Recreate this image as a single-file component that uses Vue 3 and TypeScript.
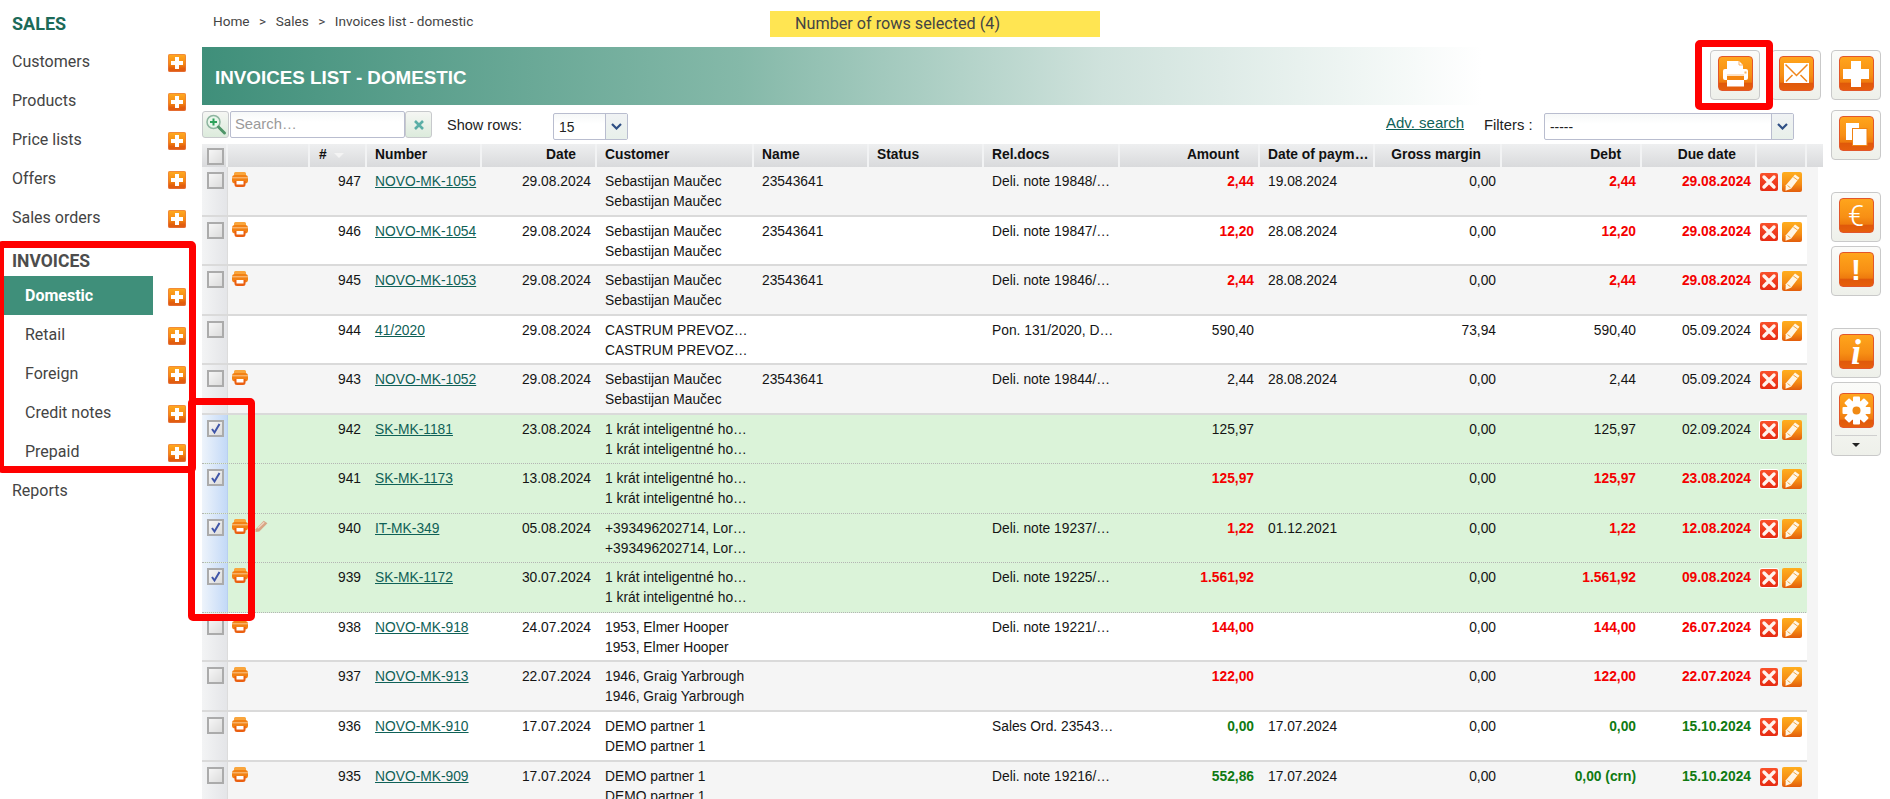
<script setup lang="ts">
type Tone = '' | 'red' | 'green'
interface InvoiceRow {
  no: number
  number: string
  date: string
  customer: string
  name: string
  rel: string
  amount: string
  paid: string
  margin: string
  debt: string
  due: string
  tone: Tone
  printer: boolean
  selected?: boolean
  note?: boolean
}

const S = 'Sebastijan Maučec'
const K = '1 krát inteligentné ho…'

const topItems = ['Customers', 'Products', 'Price lists', 'Offers', 'Sales orders']
const invoiceItems = ['Domestic', 'Retail', 'Foreign', 'Credit notes', 'Prepaid']

const headers = [
  { t: '', c: '' },
  { t: '', c: '' },
  { t: '#', c: 'sort' },
  { t: 'Number', c: '' },
  { t: 'Date', c: 'r' },
  { t: 'Customer', c: '' },
  { t: 'Name', c: '' },
  { t: 'Status', c: '' },
  { t: 'Rel.docs', c: '' },
  { t: 'Amount', c: 'r' },
  { t: 'Date of paym…', c: '' },
  { t: 'Gross margin', c: 'r' },
  { t: 'Debt', c: 'r' },
  { t: 'Due date', c: 'r' },
  { t: '', c: '' },
  { t: '', c: '' },
]

const rows: InvoiceRow[] = [
  { no: 947, number: 'NOVO-MK-1055', date: '29.08.2024', customer: S, name: '23543641', rel: 'Deli. note 19848/…', amount: '2,44', paid: '19.08.2024', margin: '0,00', debt: '2,44', due: '29.08.2024', tone: 'red', printer: true },
  { no: 946, number: 'NOVO-MK-1054', date: '29.08.2024', customer: S, name: '23543641', rel: 'Deli. note 19847/…', amount: '12,20', paid: '28.08.2024', margin: '0,00', debt: '12,20', due: '29.08.2024', tone: 'red', printer: true },
  { no: 945, number: 'NOVO-MK-1053', date: '29.08.2024', customer: S, name: '23543641', rel: 'Deli. note 19846/…', amount: '2,44', paid: '28.08.2024', margin: '0,00', debt: '2,44', due: '29.08.2024', tone: 'red', printer: true },
  { no: 944, number: '41/2020', date: '29.08.2024', customer: 'CASTRUM PREVOZ…', name: '', rel: 'Pon. 131/2020, D…', amount: '590,40', paid: '', margin: '73,94', debt: '590,40', due: '05.09.2024', tone: '', printer: false },
  { no: 943, number: 'NOVO-MK-1052', date: '29.08.2024', customer: S, name: '23543641', rel: 'Deli. note 19844/…', amount: '2,44', paid: '28.08.2024', margin: '0,00', debt: '2,44', due: '05.09.2024', tone: '', printer: true },
  { no: 942, number: 'SK-MK-1181', date: '23.08.2024', customer: K, name: '', rel: '', amount: '125,97', paid: '', margin: '0,00', debt: '125,97', due: '02.09.2024', tone: '', printer: false, selected: true },
  { no: 941, number: 'SK-MK-1173', date: '13.08.2024', customer: K, name: '', rel: '', amount: '125,97', paid: '', margin: '0,00', debt: '125,97', due: '23.08.2024', tone: 'red', printer: false, selected: true },
  { no: 940, number: 'IT-MK-349', date: '05.08.2024', customer: '+393496202714, Lor…', name: '', rel: 'Deli. note 19237/…', amount: '1,22', paid: '01.12.2021', margin: '0,00', debt: '1,22', due: '12.08.2024', tone: 'red', printer: true, selected: true, note: true },
  { no: 939, number: 'SK-MK-1172', date: '30.07.2024', customer: K, name: '', rel: 'Deli. note 19225/…', amount: '1.561,92', paid: '', margin: '0,00', debt: '1.561,92', due: '09.08.2024', tone: 'red', printer: true, selected: true },
  { no: 938, number: 'NOVO-MK-918', date: '24.07.2024', customer: '1953, Elmer Hooper', name: '', rel: 'Deli. note 19221/…', amount: '144,00', paid: '', margin: '0,00', debt: '144,00', due: '26.07.2024', tone: 'red', printer: true },
  { no: 937, number: 'NOVO-MK-913', date: '22.07.2024', customer: '1946, Graig Yarbrough', name: '', rel: '', amount: '122,00', paid: '', margin: '0,00', debt: '122,00', due: '22.07.2024', tone: 'red', printer: true },
  { no: 936, number: 'NOVO-MK-910', date: '17.07.2024', customer: 'DEMO partner 1', name: '', rel: 'Sales Ord. 23543…', amount: '0,00', paid: '17.07.2024', margin: '0,00', debt: '0,00', due: '15.10.2024', tone: 'green', printer: true },
  { no: 935, number: 'NOVO-MK-909', date: '17.07.2024', customer: 'DEMO partner 1', name: '', rel: 'Deli. note 19216/…', amount: '552,86', paid: '17.07.2024', margin: '0,00', debt: '0,00 (crn)', due: '15.10.2024', tone: 'green', printer: true },
]
</script>

<template>
  <div class="page">
    <svg class="defs" width="0" height="0" aria-hidden="true">
      <defs>
        <symbol id="mini-print" viewBox="0 0 16 15">
          <path d="M3.500 0h9A1.500 1.500 0 0 1 14 1.500V4H2V1.500A1.500 1.500 0 0 1 3.500 0z" fill="#f9a53c" />
          <rect x="0" y="3" width="16" height="8.500" rx="3" fill="#f28114" />
          <rect x="0" y="5.300" width="16" height="1" fill="#fbc68c" />
          <path d="M2.500 9h11v3.500A2.500 2.500 0 0 1 11 15H5a2.500 2.500 0 0 1-2.500-2.500z" fill="#ea5f10" />
          <rect x="4.500" y="9" width="7" height="3.500" fill="#fff" />
        </symbol>
        <symbol id="mini-note" viewBox="0 0 12 12">
          <path d="M0.500 9.500L8 1.500l3.500 2.500-7.500 7.500-3.500 0.500z" fill="#d8a585" />
          <path d="M2.500 8.500L8.500 3" stroke="#efd7c4" stroke-width="1.200" />
        </symbol>
        <symbol id="big-print" viewBox="0 0 35 35">
          <path d="M9 5h12l4 4v7H9z" fill="#fff" />
          <path d="M21 5v4h4" fill="none" stroke="#f6a24a" stroke-width="0.800" />
          <rect x="5" y="13" width="25" height="11" rx="2" fill="#fff" />
          <rect x="26.500" y="15.500" width="2" height="2" fill="#f9b25a" />
          <rect x="9" y="18.500" width="17" height="1" fill="#fbc48a" />
          <rect x="9" y="20" width="17" height="4" fill="#f5860f" />
          <rect x="9" y="24" width="17" height="6.500" fill="#fff" />
        </symbol>
        <symbol id="big-mail" viewBox="0 0 35 35">
          <rect x="5" y="7" width="25" height="20" fill="#fff" />
          <path d="M6.500 8.500l11 11 11-11M7 25.500l6.500-6.500M28 25.500L21.500 19" fill="none" stroke="#f0861b" stroke-width="1.500" />
        </symbol>
        <symbol id="big-copy" viewBox="0 0 35 35">
          <rect x="7" y="7" width="13" height="17" fill="#fff" />
          <rect x="13.500" y="12.500" width="14.500" height="17" fill="#fff" stroke="#f08212" stroke-width="1" />
        </symbol>
        <symbol id="big-gear" viewBox="0 0 35 35">
          <g fill="#fff">
            <rect x="14" y="3.500" width="7" height="28" rx="1" />
            <rect x="14" y="3.500" width="7" height="28" rx="1" transform="rotate(45 17.500 17.500)" />
            <rect x="14" y="3.500" width="7" height="28" rx="1" transform="rotate(90 17.500 17.500)" />
            <rect x="14" y="3.500" width="7" height="28" rx="1" transform="rotate(135 17.500 17.500)" />
            <circle cx="17.500" cy="17.500" r="10" />
          </g>
          <circle cx="17.500" cy="17.500" r="4" fill="#f08a14" />
        </symbol>
        <symbol id="x-mark" viewBox="0 0 18 18">
          <path d="M4 4l10 10M14 4L4 14" stroke="#fff4ee" stroke-width="3.400" stroke-linecap="round" />
        </symbol>
        <symbol id="pencil" viewBox="0 0 20 20">
          <path d="M13 2.500l4.500 3.200-8.500 11-5.500 2 0.300-5.500z" fill="#fff5e4" />
          <path d="M11.300 5l4.500 3.200" stroke="#f2a33a" stroke-width="1" />
          <path d="M5.500 13.500l3 2.300" stroke="#f2a33a" stroke-width="1" />
        </symbol>
      </defs>
    </svg>

    <aside class="side">
      <h2 class="side-title">SALES</h2>
      <div v-for="item in topItems" :key="item" class="side-row">
        <span class="side-label">{{ item }}</span>
        <span class="plus"></span>
      </div>
      <h3 class="side-group">INVOICES</h3>
      <div v-for="(item, i) in invoiceItems" :key="item" class="side-row sub">
        <span class="side-label" :class="{ active: i === 0 }">{{ item }}</span>
        <span class="plus"></span>
      </div>
      <div class="side-row"><span class="side-label">Reports</span></div>
    </aside>

    <main class="main">
      <div class="topbar">
        <nav class="crumbs">
          <span>Home</span><span class="gt">&gt;</span><span>Sales</span><span class="gt">&gt;</span><span>Invoices list - domestic</span>
        </nav>
        <div class="notice">Number of rows selected (4)</div>
      </div>

      <div class="titlebar">
        <h1 class="banner">INVOICES LIST - DOMESTIC</h1>
        <button class="tool print-tool"><span class="face"><svg class="glyph"><use href="#big-print" /></svg></span></button>
        <button class="tool mail-tool"><span class="face"><svg class="glyph"><use href="#big-mail" /></svg></span></button>
      </div>

      <div class="filters">
        <button class="sq search-btn">
          <svg width="24" height="24" viewBox="0 0 24 24">
            <circle cx="9.500" cy="9" r="6.500" fill="#e7f6ea" stroke="#8db59f" stroke-width="1.500" />
            <path d="M14.500 14l6 6" stroke="#4f9568" stroke-width="3" stroke-linecap="round" />
            <path d="M9.500 5.500v7M6 9h7" stroke="#2ca25a" stroke-width="2" />
          </svg>
        </button>
        <div class="search-input">Search…</div>
        <button class="sq clear-btn">
          <svg width="12" height="12" viewBox="0 0 12 12"><path d="M2 2l8 8M10 2l-8 8" stroke="#5aaea6" stroke-width="2.600" /></svg>
        </button>
        <span class="show-label">Show rows:</span>
        <div class="select rows-select">
          <span class="select-value">15</span>
          <span class="select-arrow"><svg width="11" height="7" viewBox="0 0 11 7"><path d="M1 1l4.500 4.500L10 1" fill="none" stroke="#2f4f84" stroke-width="2.200" /></svg></span>
        </div>
        <a class="adv">Adv. search</a>
        <span class="filters-label">Filters :</span>
        <div class="select filter-select">
          <span class="select-value">-----</span>
          <span class="select-arrow"><svg width="11" height="7" viewBox="0 0 11 7"><path d="M1 1l4.500 4.500L10 1" fill="none" stroke="#2f4f84" stroke-width="2.200" /></svg></span>
        </div>
      </div>

      <div class="table">
        <div class="thead grid-row">
          <div v-for="(h, i) in headers" :key="i" class="th" :class="h.c">
            <span v-if="i === 0" class="check"></span>
            <template v-else>{{ h.t }}</template>
          </div>
        </div>
        <div
          v-for="(r, i) in rows"
          :key="r.no"
          class="tr grid-row"
          :class="{ alt: i % 2 === 0, selected: r.selected }"
        >
          <div class="td cb"><span class="check">
            <svg v-if="r.selected" width="13" height="13" viewBox="0 0 13 13"><path d="M3 7l2.500 3.500L10.500 2" fill="none" stroke="#3f55a8" stroke-width="2" /></svg>
          </span></div>
          <div class="td acts">
            <svg v-if="r.printer" class="mini-print"><use href="#mini-print" /></svg>
            <svg v-if="r.note" class="mini-note"><use href="#mini-note" /></svg>
          </div>
          <div class="td num">{{ r.no }}</div>
          <div class="td"><a class="link">{{ r.number }}</a></div>
          <div class="td num">{{ r.date }}</div>
          <div class="td">{{ r.customer }}<br />{{ r.customer }}</div>
          <div class="td">{{ r.name }}</div>
          <div class="td"></div>
          <div class="td">{{ r.rel }}</div>
          <div class="td num" :class="r.tone">{{ r.amount }}</div>
          <div class="td">{{ r.paid }}</div>
          <div class="td num">{{ r.margin }}</div>
          <div class="td num" :class="r.tone">{{ r.debt }}</div>
          <div class="td num" :class="r.tone">{{ r.due }}</div>
          <div class="td row-btns">
            <span class="del"><svg width="18" height="18"><use href="#x-mark" /></svg></span>
            <span class="edit"><svg width="20" height="20"><use href="#pencil" /></svg></span>
          </div>
          <div class="gutter"></div>
        </div>
      </div>
    </main>

    <aside class="rail">
      <button class="tool"><span class="face"><span class="cross"></span></span></button>
      <button class="tool copy"><span class="face"><svg class="glyph"><use href="#big-copy" /></svg></span></button>
      <button class="tool euro"><span class="face sym euro-sym">€</span></button>
      <button class="tool warn"><span class="face sym warn-sym">!</span></button>
      <button class="tool info"><span class="face sym info-sym">i</span></button>
      <button class="tool gear">
        <span class="face"><svg class="glyph"><use href="#big-gear" /></svg></span>
        <span class="gear-foot"><span class="caret"></span></span>
      </button>
    </aside>

    <div class="mark mark-menu"></div>
    <div class="mark mark-rows"></div>
    <div class="mark mark-print"></div>
  </div>
</template>

<style>
html, body { margin: 0; background: #fff; }
</style>

<style scoped>
.page {
  position: relative;
  display: flex;
  width: 1890px;
  height: 799px;
  overflow: hidden;
  background: #fff;
  font-family: "Liberation Sans", Arial, sans-serif;
  color: #111;
}
.defs { position: absolute; }

/* sidebar */
.side {
  width: 202px;
  flex: none;
  font-family: Roboto, sans-serif;
  font-size: 16px;
  color: #444;
}
.side-title {
  margin: 0;
  height: 42px;
  padding: 13px 0 0 12px;
  box-sizing: border-box;
  font-size: 18px;
  line-height: 21px;
  font-weight: 700;
  color: #1c6a58;
}
.side-group {
  margin: 0;
  height: 39px;
  padding: 14px 0 0 12px;
  box-sizing: border-box;
  font-size: 17.500px;
  line-height: 20px;
  font-weight: 700;
  color: #4d4d4d;
}
.side-row {
  display: flex;
  align-items: center;
  height: 39px;
}
.side-label {
  display: block;
  box-sizing: border-box;
  width: 168px;
  height: 39px;
  padding-left: 12px;
  line-height: 40px;
}
.sub .side-label {
  width: 149px;
  margin: 0 15px 0 4px;
  padding-left: 21px;
}
.side-label.active {
  background: #3f8f7a;
  color: #fff;
  font-weight: 700;
}
.plus {
  position: relative;
  width: 18px;
  height: 18px;
  border-radius: 2px;
  margin-top: 2px;
  background: linear-gradient(#ffaa22, #f58a12 55%, #e35f0c 80%, #dd5a14);
  box-shadow: inset 0 0 0 1px rgba(233, 120, 70, .6);
}
.plus::before, .plus::after {
  content: "";
  position: absolute;
  background: #fff;
}
.plus::before { left: 7px; top: 3px; width: 4px; height: 12px; }
.plus::after { left: 3px; top: 7px; width: 12px; height: 4px; }

/* main */
.main {
  width: 1619px;
  flex: none;
  font-size: 13.800px;
}
.topbar {
  position: relative;
  height: 47px;
  display: flex;
  box-sizing: border-box;
  padding: 11px 0 0 11px;
}
.crumbs {
  width: 557px;
  display: flex;
  font-family: Roboto, sans-serif;
  font-size: 13.600px;
  line-height: 20px;
  color: #444;
}
.gt { margin: 0 9.500px; }
.notice {
  width: 330px;
  height: 26px;
  box-sizing: border-box;
  padding-left: 25px;
  background: #ffe552;
  font-family: Roboto, sans-serif;
  font-size: 16.200px;
  line-height: 26px;
  color: #444;
}
.titlebar {
  display: flex;
  height: 58px;
  align-items: flex-start;
}
.banner {
  flex: 1;
  margin: 0 10px 0 0;
  height: 58px;
  box-sizing: border-box;
  padding-left: 13px;
  font-size: 18.800px;
  line-height: 62px;
  font-weight: 700;
  color: #fff;
  background: linear-gradient(90deg, #3f8f7a 0, #85b9a9 540px, #cfe2dc 900px, #fff 1280px);
}
.tool {
  display: flex;
  flex-direction: column;
  align-items: center;
  width: 50px;
  height: 50px;
  padding: 5px 0 0;
  margin: 3px 0 0;
  box-sizing: border-box;
  flex: none;
  border: 1px solid #c9c9c9;
  border-radius: 4px;
  background: linear-gradient(#fbfbf9, #eef0ea);
  cursor: pointer;
}
.mail-tool { margin-left: 11px; }
.face {
  position: relative;
  display: flex;
  align-items: center;
  justify-content: center;
  box-sizing: border-box;
  width: 35px;
  height: 35px;
  border-radius: 4px;
  border: 1px solid #e2562a;
  background: linear-gradient(#ffa51c, #f78f14 55%, #ee7a0e 76%, #e0590a 80%, #e65f0c);
}
.glyph { width: 35px; height: 35px; flex: none; }
.cross { position: relative; width: 26px; height: 26px; }
.cross::before, .cross::after { content: ""; position: absolute; background: #fff; }
.cross::before { left: 8px; top: 0; width: 10px; height: 26px; }
.cross::after { left: 0; top: 8px; width: 26px; height: 10px; }
.sym { color: #fff; }
.euro-sym { font-family: Roboto, sans-serif; font-weight: 300; font-size: 29px; }
.warn-sym { font-family: "Liberation Sans", sans-serif; font-weight: 700; font-size: 30px; }
.info-sym { font-family: "Liberation Serif", serif; font-style: italic; font-weight: 700; font-size: 36px; }

/* filters */
.filters {
  height: 39px;
  display: flex;
  align-items: flex-start;
  padding-top: 6px;
  box-sizing: border-box;
  color: #222;
}
.sq {
  width: 27px;
  height: 27px;
  padding: 0;
  display: flex;
  align-items: center;
  justify-content: center;
  box-sizing: border-box;
  border: 1px solid #c7c9cc;
  border-radius: 3px;
  background: linear-gradient(#f5f6f3, #dcebdc);
}
.search-input {
  width: 175px;
  height: 27px;
  margin: 0 0 0 1px;
  box-sizing: border-box;
  padding-left: 4px;
  border: 1px solid #b9bdcf;
  border-radius: 2px;
  line-height: 25px;
  color: #9a9a9a;
  font-size: 14.800px;
  background: linear-gradient(#f6f8f8, #fff 40%);
}
.show-label { width: 106px; margin-left: 15px; font-size: 14.500px; line-height: 28px; }
.select {
  display: flex;
  height: 27px;
  margin-top: 2px;
  box-sizing: border-box;
  border: 1px solid #b9bdcf;
  border-radius: 2px;
  background: linear-gradient(#f6f8f8, #fff 40%);
}
.select-value { flex: 1; padding-left: 5px; line-height: 27px; }
.select-arrow {
  width: 21px;
  display: flex;
  align-items: center;
  justify-content: center;
  border-left: 1px solid #b9bdcf;
  background: linear-gradient(#f0f2f4, #e8f0ea);
}
.rows-select { width: 75px; }
.filter-select { width: 250px; }
.adv {
  margin-left: 758px;
  width: 98px;
  font-size: 15px;
  line-height: 23px;
  color: #0f6157;
  text-decoration: underline;
}
.filters-label { width: 60px; font-size: 14.800px; line-height: 29px; }

/* table */
.table { width: 1616px; }
.grid-row {
  display: grid;
  grid-template-columns: 26px 82px 57px 115px 115px 157px 115px 115px 136px 140px 115px 127px 140px 115px 50px 11px;
}
.thead { height: 23px; }
.th {
  box-sizing: border-box;
  height: 23px;
  padding: 0 8px;
  border-right: 2px solid #f2f3f4;
  background: linear-gradient(#eeeff0, #d9dadc);
  font-weight: 700;
  line-height: 22px;
  white-space: nowrap;
  overflow: hidden;
}
.th:first-child { padding: 4px 0 0 5px; }
.th:last-child { border-right: 0; }
.th.r { text-align: right; padding-right: 19px; }
.th.sort { position: relative; padding-left: 9px; }
.th.sort::after {
  content: "";
  position: absolute;
  left: 24px;
  top: 9px;
  border-left: 5px solid transparent;
  border-right: 5px solid transparent;
  border-top: 5px solid #f4f4f4;
}
.tr {
  height: 49.550px;
  box-sizing: border-box;
  border-bottom: 2px solid #dadada;
  background: #fff;
}
.tr.alt { background: #f5f5f5; }
.tr.selected {
  background: #dbf3d9;
  border-bottom: 1px dotted #b4b4b4;
}
.td {
  padding: 5px 6px 0 8px;
  line-height: 20px;
  white-space: nowrap;
  overflow: hidden;
  min-width: 0;
  color: #141414;
}
.td.num { text-align: right; }
.td.red { color: #f40000; font-weight: 700; }
.td.green { color: #0f7a12; font-weight: 700; }
.td.cb {
  padding: 5px 0 0 5px;
  background: linear-gradient(90deg, #f3f4f5, #e4e5e8);
  border-right: 1px solid #dcdcdc;
}
.selected .td.cb { background: linear-gradient(90deg, #eef4fb, #c3d9f7); border-right-color: #b9cff0; }
.td.acts { padding: 5px 0 0 4px; display: flex; align-items: flex-start; }
.mini-print { width: 16px; height: 15px; flex: none; }
.mini-note { width: 13px; height: 13px; margin: 0 0 0 7px; flex: none; }
.link { color: #0f6157; text-decoration: underline; }
.check {
  display: block;
  box-sizing: border-box;
  width: 17px;
  height: 17px;
  border: 2px solid #ababab;
  background: linear-gradient(135deg, #f6f6f6, #dcdcdc);
}
.check svg { display: block; margin: 0; }
.td.row-btns { padding: 5px 0 0 3px; display: flex; align-items: flex-start; gap: 4px; overflow: visible; }
.del {
  display: block;
  width: 18px;
  height: 18px;
  margin-top: 1px;
  border-radius: 2px;
  background: linear-gradient(#f9502a, #e62b12);
}
.selected .del { box-shadow: 0 0 0 1px #fff; }
.edit {
  display: block;
  width: 20px;
  height: 20px;
  border-radius: 2px;
  background: linear-gradient(#ffae1e, #f58d14 60%, #e25d0c);
}
.del svg, .edit svg { display: block; }
.gutter { background: #f5f5f5; margin-bottom: -2px; }

/* rail */
.rail {
  width: 50px;
  margin: 47px 0 0 10px;
  flex: none;
}
.rail .tool { display: flex; }
.copy { margin-top: 10px; }
.euro { margin-top: 32px; }
.warn { margin-top: 4px; }
.info { margin-top: 32px; }
.gear { margin-top: 4px; height: 74px; padding-top: 10px; }
.gear-foot {
  margin-top: 7px;
  width: 42px;
  border-top: 1px solid #cfcfcf;
  height: 16px;
  display: flex;
  justify-content: center;
  padding-top: 7px;
  box-sizing: border-box;
}
.caret {
  display: block;
  width: 0;
  height: 0;
  border-left: 4px solid transparent;
  border-right: 4px solid transparent;
  border-top: 4px solid #222;
}

/* annotation frames */
.mark {
  position: absolute;
  box-sizing: border-box;
  border: 7px solid #ff0000;
  border-radius: 5px;
  pointer-events: none;
}
.mark-menu { left: -3px; top: 241px; width: 199px; height: 232px; }
.mark-rows { left: 188px; top: 398px; width: 67px; height: 223px; }
.mark-print { left: 1695px; top: 40px; width: 78px; height: 70px; }
</style>
